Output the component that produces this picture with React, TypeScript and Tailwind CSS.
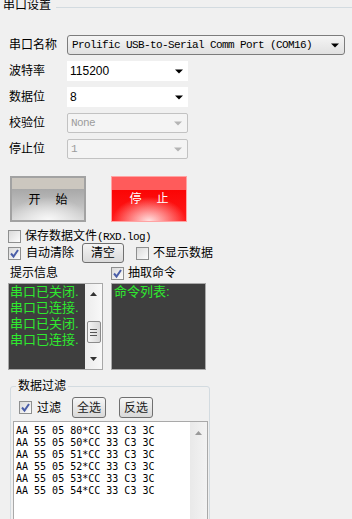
import React from 'react'

const cjk = "font-['Liberation_Sans','Noto_Sans_CJK_SC',sans-serif]"
const mono = "font-['Liberation_Mono','Noto_Sans_CJK_SC',monospace]"

function Arrow({ color = '#000' }: { color?: string }) {
  return (
    <svg width="8" height="5" viewBox="0 0 8 5">
      <path d="M0 0.5 L8 0.5 L4 4.5 Z" fill={color} />
    </svg>
  )
}

function Checkbox({ checked = false }: { checked?: boolean }) {
  return (
    <span className="w-[13px] h-[13px] shrink-0 border border-[#8e8f8f] bg-gradient-to-br from-[#dadada] to-[#fcfcfc] flex items-center justify-center">
      {checked && (
        <svg width="11" height="11" viewBox="0 0 11 11">
          <path d="M2 5.5 L4.5 8.5 L9 2" stroke="#4a5ea8" strokeWidth="2" fill="none" />
        </svg>
      )}
    </span>
  )
}

function SmallBtn({ label, className = '' }: { label: string; className?: string }) {
  return (
    <div
      className={`h-[21px] w-[34px] rounded-[3px] border border-[#707070] bg-gradient-to-b from-[#f6f6f6] to-[#d9d9d9] flex items-center justify-center text-[12px] text-[#222] ${className}`}
    >
      {label}
    </div>
  )
}

function Row({ label, children }: { label: string; children: React.ReactNode }) {
  return (
    <div className="flex items-center h-[20px]">
      <div className="w-[67px] pl-[9px] text-[12px]">{label}</div>
      {children}
    </div>
  )
}

function Combo({ value, disabled = false }: { value: string; disabled?: boolean }) {
  if (disabled) {
    return (
      <div className="w-[121px] h-[20px] rounded-[2px] border border-[#c2c2c2] bg-[#f4f4f4] flex items-center justify-between pl-[3px] pr-[5px]">
        <span className={`${mono} text-[11px] tracking-[-0.6px] text-[#9c9c9c]`}>{value}</span>
        <Arrow color="#b4b4b4" />
      </div>
    )
  }
  return (
    <div className="w-[121px] h-[20px] bg-white flex items-center justify-between pl-[3px] pr-[5px]">
      <span className="text-[12px]">{value}</span>
      <Arrow />
    </div>
  )
}

function VScroll({ thumb = false }: { thumb?: boolean }) {
  return (
    <div className="w-[17px] h-full bg-gradient-to-r from-[#ececec] to-[#f8f8f8] flex flex-col items-center justify-between py-[8px]">
      <svg width="7" height="4" viewBox="0 0 7 4">
        <path d="M0 4 L7 4 L3.5 0 Z" fill="#333" />
      </svg>
      {thumb && (
        <div className="w-[14px] h-[22px] mt-[25px] rounded-[2px] border border-[#8b8b8b] bg-gradient-to-r from-[#f4f4f4] to-[#d8d8d8] flex flex-col items-center justify-center gap-[2px]">
          <div className="w-[7px] h-px bg-[#555]" />
          <div className="w-[7px] h-px bg-[#555]" />
          <div className="w-[7px] h-px bg-[#555]" />
        </div>
      )}
      <div className="flex-1" />
      <svg width="7" height="4" viewBox="0 0 7 4">
        <path d="M0 0 L7 0 L3.5 4 Z" fill="#333" />
      </svg>
    </div>
  )
}

const logLines = ['串口已关闭.', '串口已连接.', '串口已关闭.', '串口已连接.']
const filterLines = [
  'AA 55 05 80*CC 33 C3 3C',
  'AA 55 05 50*CC 33 C3 3C',
  'AA 55 05 51*CC 33 C3 3C',
  'AA 55 05 52*CC 33 C3 3C',
  'AA 55 05 53*CC 33 C3 3C',
  'AA 55 05 54*CC 33 C3 3C',
]

export default function App() {
  return (
    <div className={`w-[352px] h-[519px] overflow-hidden bg-[#f0f0f0] text-black text-[12px] leading-[14px] ${cjk}`}>
      {/* Group header */}
      <div className="flex items-start h-[14px] -mt-[2px]">
        <span className="pl-[3px] pr-[5px] text-[12px]">串口设置</span>
        <div className="flex-1 h-px mt-[9px] bg-[#d3dbe0]" />
      </div>

      {/* Serial settings */}
      <div className="flex flex-col gap-[6px] mt-[23px]">
        <Row label="串口名称">
          <div className="w-[278px] h-[20px] rounded-[3px] border border-[#7c7c7c] bg-gradient-to-b from-[#f5f5f5] to-[#e1e1e1] flex items-center justify-between pl-[4px] pr-[5px]">
            <span className={`${mono} text-[11px] tracking-[-0.6px]`}>Prolific USB-to-Serial Comm Port (COM16)</span>
            <Arrow />
          </div>
        </Row>
        <Row label="波特率">
          <Combo value="115200" />
        </Row>
        <Row label="数据位">
          <Combo value="8" />
        </Row>
        <Row label="校验位">
          <Combo value="None" disabled />
        </Row>
        <Row label="停止位">
          <Combo value="1" disabled />
        </Row>
      </div>

      {/* Start / stop */}
      <div className="flex mt-[17px] pl-[10px] gap-[25px]">
        <div className="w-[76px] h-[46px] border-2 border-[#a2a2a2] flex items-center justify-center gap-[15px] pt-[2px] text-[12px] bg-[image:radial-gradient(ellipse_55%_55%_at_50%_100%,rgba(255,255,255,0.85),transparent),linear-gradient(to_bottom,#ccc7bf_0px,#ccc7bf_11px,#a8a8a8_11px,#bdbdbd_26px,#d6d6d6_42px)]">
          <span>开</span>
          <span>始</span>
        </div>
        <div className="w-[76px] h-[46px] border border-[#ffa3a3] flex items-center justify-center gap-[15px] text-[12px] text-white bg-[image:radial-gradient(ellipse_50%_55%_at_50%_100%,rgba(255,235,235,0.95),transparent),linear-gradient(to_bottom,#ff5b5b_0px,#ff5b5b_13px,#fb0505_13px,#ff1a1a_44px)]">
          <span>停</span>
          <span>止</span>
        </div>
      </div>

      {/* Options */}
      <div className="flex items-center h-[14px] mt-[7px] pl-[8px] gap-[4px]">
        <Checkbox />
        <span>
          保存数据文件<span className={`${mono} text-[11px] tracking-[-0.6px]`}>(RXD.log)</span>
        </span>
      </div>
      <div className="flex items-center h-[20px] pl-[8px]">
        <Checkbox checked />
        <span className="ml-[5px]">自动清除</span>
        <div className="ml-[8px] w-[42px] h-[20px] rounded-[3px] border border-[#707070] bg-gradient-to-b from-[#f4f4f4] to-[#dadada] flex items-center justify-center">
          清空
        </div>
        <div className="ml-[12px]">
          <Checkbox />
        </div>
        <span className="ml-[4px]">不显示数据</span>
      </div>
      <div className="flex items-center h-[14px] mt-[3px]">
        <span className="w-[111px] pl-[10px]">提示信息</span>
        <Checkbox checked />
        <span className="ml-[4px]">抽取命令</span>
      </div>

      {/* Log / command boxes */}
      <div className="flex mt-[3px] pl-[8px] gap-[8px] h-[87px]">
        <div className="w-[95px] h-full border border-[#a8a8a8] bg-[#3e3e3e] flex">
          <div className="flex-1 pl-[1px] text-[13px] leading-[16px] text-[#2eea2e] overflow-hidden whitespace-nowrap">
            {logLines.map((l, i) => (
              <div key={i}>{l}</div>
            ))}
          </div>
          <VScroll thumb />
        </div>
        <div className="w-[95px] h-full border border-[#a8a8a8] bg-[#3e3e3e] pl-[2px] text-[13px] leading-[16px] text-[#2eea2e]">
          命令列表:
        </div>
      </div>

      {/* Data filter */}
      <fieldset className="ml-[10px] mt-[9px] w-[200px] h-[200px] border border-[#d3dbe0] rounded-[3px]">
        <legend className="ml-[5px] px-[2px] text-[12px] leading-[14px]">数据过滤</legend>
        <div className="flex items-center h-[21px] mt-[4px] pl-[8px]">
          <Checkbox checked />
          <span className="ml-[5px]">过滤</span>
          <SmallBtn label="全选" className="ml-[11px]" />
          <SmallBtn label="反选" className="ml-[13px]" />
        </div>
        <div className="ml-[2px] mt-[3px] w-[195px] h-[120px] border border-[#a9a9a9] bg-white flex">
          <div className="flex-1 pl-[2px] pt-[3px] font-['DejaVu_Sans_Mono',monospace] text-[10px] leading-[12px] whitespace-pre">
            {filterLines.map((l, i) => (
              <div key={i}>{l}</div>
            ))}
          </div>
          <div className="w-[17px] h-full bg-gradient-to-r from-[#e9e9e9] to-[#f3f3f3] flex justify-center pt-[9px]">
            <svg width="7" height="4" viewBox="0 0 7 4">
              <path d="M0 4 L7 4 L3.5 0 Z" fill="#9a9a9a" />
            </svg>
          </div>
        </div>
      </fieldset>
    </div>
  )
}
